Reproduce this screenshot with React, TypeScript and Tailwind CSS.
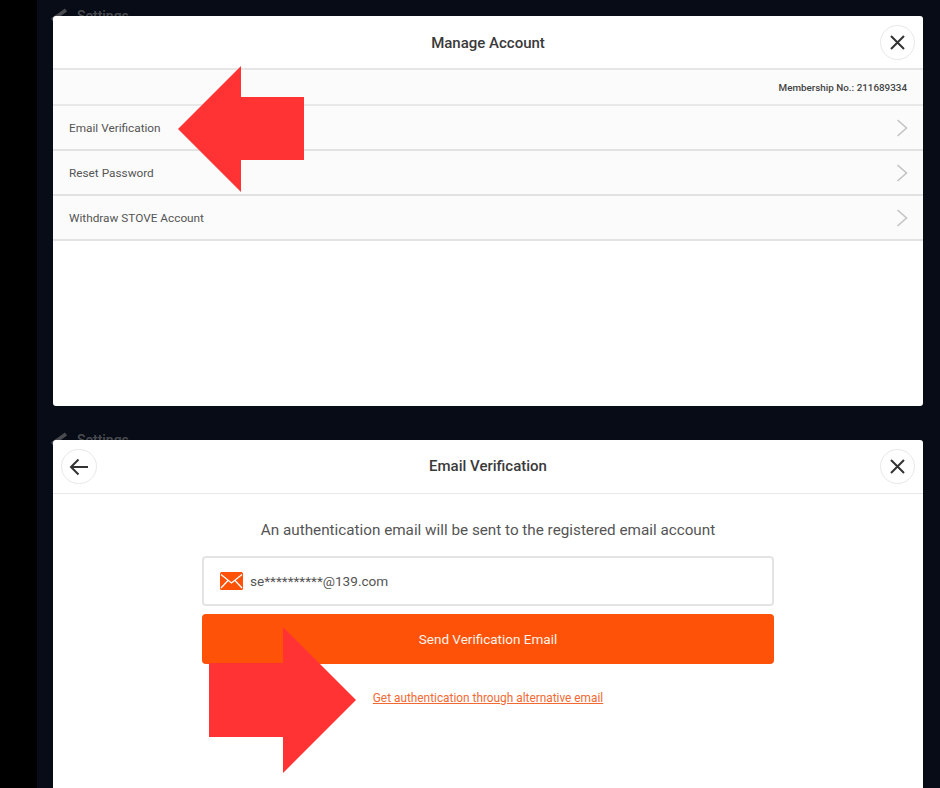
import React from "react";

const Close = () => (
  <button className="absolute right-[8px] top-[9px] w-[35px] h-[35px] rounded-full border border-[#e8e8e8] bg-white flex items-center justify-center">
    <svg width="17" height="17" viewBox="0 0 17 17" fill="none" stroke="#333" strokeWidth="2">
      <path d="M2 2l13 13M15 2L2 15" />
    </svg>
  </button>
);

const Chevron = () => (
  <svg width="12" height="18" viewBox="0 0 12 18" fill="none" stroke="#c4c4c4" strokeWidth="1.6">
    <path d="M1.5 1l9 8-9 8" />
  </svg>
);

const Row = ({ label }: { label: string }) => (
  <div className="h-[45px] pl-[16px] pr-[15px] flex items-center justify-between bg-[#fbfbfb] border-b-2 border-[#e2e2e2] text-[11.8px] text-[#555]">
    <span className="pt-[2px]">{label}</span>
    <Chevron />
  </div>
);

const Peek = () => (
  <div className="absolute left-[-3px] top-[-8px] flex items-center gap-[9px] opacity-50">
    <svg width="18" height="16" viewBox="0 0 18 16" fill="none" stroke="#8a8a8a" strokeWidth="3.5">
      <path d="M16 2L2 12" />
    </svg>
    <span className="text-[14px] text-[#8a8a8a] leading-none font-medium">Settings</span>
  </div>
);

export default function App() {
  return (
    <div
      className="relative w-[940px] h-[788px] overflow-hidden flex bg-[#080c16] text-[#333]"
      style={{ fontFamily: "Roboto, sans-serif" }}
    >
      <div className="w-[37px] shrink-0 bg-black" />
      <div className="flex-1 flex flex-col gap-[34px] pt-[16px] pl-[16px] pr-[17px]">
        <section className="relative h-[390px] shrink-0">
          <Peek />
          <div className="relative h-full rounded-[3px] bg-white overflow-hidden">
            <header className="h-[54px] pt-[2px] flex items-center justify-center border-b-2 border-[#e6e6e6] text-[15px] font-medium text-[#3a3a3a]">
              Manage Account
              <Close />
            </header>
            <div className="h-[36px] pt-[2px] pr-[16px] flex items-center justify-end bg-[#fbfbfb] border-b-2 border-[#e8e8e8] text-[9.85px] font-medium text-[#444]">
              Membership No.: 211689334
            </div>
            <Row label="Email Verification" />
            <Row label="Reset Password" />
            <Row label="Withdraw STOVE Account" />
          </div>
        </section>
        <section className="relative h-[400px] shrink-0">
          <Peek />
          <div className="relative h-full rounded-t-[3px] bg-white overflow-hidden">
            <header className="h-[54px] flex items-center justify-center border-b border-[#e8e8e8] text-[15px] font-medium text-[#3a3a3a]">
              <button className="absolute left-[8px] top-[9px] w-[36px] h-[35px] rounded-full border border-[#e8e8e8] bg-white flex items-center justify-center">
                <svg width="20" height="18" viewBox="0 0 20 18" fill="none" stroke="#333" strokeWidth="2">
                  <path d="M19 9H2M9.5 1.5L2 9l7.5 7.5" />
                </svg>
              </button>
              Email Verification
              <Close />
            </header>
            <div className="flex flex-col items-center pt-[26px]">
              <p className="text-[15.25px] leading-[20px] text-[#555]">
                An authentication email will be sent to the registered email account
              </p>
              <div className="mt-[16px] w-[572px] h-[50px] rounded-[4px] border-2 border-[#e4e4e4] flex items-center pl-[16px] gap-[7px] text-[13.6px] text-[#555]">
                <svg width="23" height="18" viewBox="0 0 23 18">
                  <rect width="23" height="18" rx="1.5" fill="#fe5208" />
                  <path d="M1 2.5l10.5 8.5L22 2.5M1 16l7-7.5M22 16l-7-7.5" fill="none" stroke="#fff" strokeWidth="1.3" />
                </svg>
                <span>se**********@139.com</span>
              </div>
              <button className="mt-[8px] w-[572px] h-[50px] pt-[1px] rounded-[4px] bg-[#fe5208] text-[#fff3ea] text-[13.5px]">
                Send Verification Email
              </button>
              <a className="mt-[26px] text-[11.85px] leading-[16px] text-[#f26a33] underline">
                Get authentication through alternative email
              </a>
            </div>
          </div>
        </section>
      </div>
      <svg className="absolute left-0 top-0 pointer-events-none" width="940" height="788" viewBox="0 0 940 788">
        <path d="M178 129L241 66V97H304V160H241V192Z" fill="#ff3333" />
        <path d="M356 700L283 627V663H209V737H283V773Z" fill="#ff3333" />
      </svg>
    </div>
  );
}
